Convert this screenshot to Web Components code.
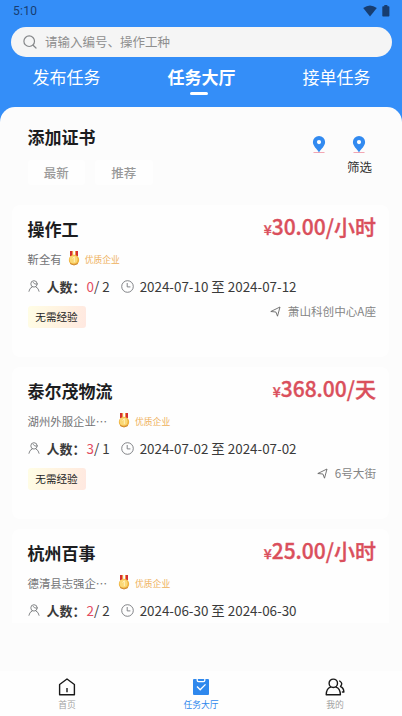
<!DOCTYPE html>
<html lang="zh-CN">
<head>
<meta charset="utf-8">
<title>任务大厅</title>
<style>
html,body{margin:0;height:100%;overflow:hidden}
body{font-family:"Noto Sans CJK SC",sans-serif;color:#1c1d1f;background:#fcfcfc}
</style>
</head>
<body>
<app-shell>
  <status-bar slot="header" time="5:10"></status-bar>
  <search-field slot="header">请输入编号、操作工种</search-field>
  <top-tabs slot="header">
    <top-tab>发布任务</top-tab><top-tab active>任务大厅</top-tab><top-tab>接单任务</top-tab>
  </top-tabs>
  <filter-bar heading="添加证书" action="筛选">
    <filter-chip>最新</filter-chip><filter-chip>推荐</filter-chip>
  </filter-bar>
  <task-list>
    <task-card name="操作工" price="30.00/小时" company="靳全有" joined="0" total="2" start="2024-07-10" end="2024-07-12" place="萧山科创中心A座"></task-card>
    <task-card name="泰尔茂物流" price="368.00/天" company="湖州外服企业⋯" joined="3" total="1" start="2024-07-02" end="2024-07-02" place="6号大街"></task-card>
    <task-card name="杭州百事" price="25.00/小时" company="德清县志强企⋯" joined="2" total="2" start="2024-06-30" end="2024-06-30"></task-card>
  </task-list>
  <nav-bar slot="footer">
    <nav-item icon="home">首页</nav-item><nav-item icon="tasks" active>任务大厅</nav-item><nav-item icon="user">我的</nav-item>
  </nav-bar>
</app-shell>
<script>
const define = (tag, render) => customElements.define(tag, class extends HTMLElement {
  constructor() {
    super();
    this.attachShadow({ mode: 'open' });
  }
  connectedCallback() {
    this.shadowRoot.innerHTML = render(name => this.getAttribute(name));
  }
});

const icons = {
  search: '<svg width="14" height="14" viewBox="0 0 14 14" fill="none" stroke="#858789" stroke-width="1.2" stroke-linecap="round"><circle cx="6.2" cy="6.2" r="5.3"/><path d="M10.1 10.2 13 13"/></svg>',
  wifi: '<svg width="14" height="12" viewBox="0 0 14 12"><path d="M.2 3.1Q7-2.1 13.8 3.1L7 11.4Z" fill="#173d70"/></svg>',
  battery: '<svg width="8" height="12" viewBox="0 0 8 12"><path d="M2.3 0h3.1v1.2h1.2q.8 0 .8.8v8.8q0 .8-.8.8H1.1q-.8 0-.8-.8V2q0-.8.8-.8h1.2z" fill="#173d70"/></svg>',
  pin: '<svg width="14" height="18" viewBox="0 0 14 18"><path d="M1.500 16.500h11" stroke="#f3a6b3" stroke-width="1"/><path d="M7 0a6.100 6.100 0 0 0-6.100 6.100C.9 10.100 4.800 13 7 16.400c2.200-3.400 6.100-6.300 6.100-10.300A6.100 6.100 0 0 0 7 0z" fill="#328af0"/><circle cx="7" cy="6.100" r="2.100" fill="#fff"/></svg>',
  medal: '<svg width="12" height="15" viewBox="0 0 12 15"><path d="M2 0h3v5H2zM7 0h3v5H7z" fill="#d42e32"/><path d="M4.200 0h1v5h-1zM7 0h.8v5H7z" fill="#f5b34c"/><circle cx="6" cy="8.900" r="5.200" fill="#eeb13e"/><circle cx="5.600" cy="8.400" r="4" fill="#fbd875"/><path d="M4.500 7.500 6.300 5.800v5.400" stroke="#fff2bd" fill="none"/><path d="M2 12.500q4 3 8 0" stroke="#cf8932" fill="none"/></svg>',
  person: '<svg width="12" height="12" viewBox="0 0 12 12" fill="none" stroke="#77797c" stroke-width=".9" stroke-linecap="round"><circle cx="6" cy="3.900" r="3.200"/><path d="M5.200 2.500q.7 1.600 2.700 1.700M4.200 6.900Q1.300 8 .9 11.300M7.900 6.900q2.700 1.100 3.200 4.400"/></svg>',
  clock: '<svg width="13" height="13" viewBox="0 0 13 13" fill="none" stroke="#74767a" stroke-width=".9"><circle cx="6.500" cy="6.500" r="5.800"/><path d="M6.200 3v3.900h3.200"/></svg>',
  plane: '<svg width="11" height="11" viewBox="0 0 11 11" fill="none" stroke="#666" stroke-width=".9" stroke-linejoin="round"><path d="M.8 5.500 10 1 7.500 10.200 5.900 6z"/></svg>',
  home: '<svg width="18" height="18" viewBox="0 0 18 18" fill="none" stroke="#191919" stroke-width="1.400" stroke-linejoin="round"><path d="M1.600 6.500 9 1l7.400 5.500v10.300H1.600z"/><path d="M9 10v4.200"/></svg>',
  tasks: '<svg width="18" height="18" viewBox="0 0 18 18"><path d="M2 1h14q1 0 1 1v14q0 1-1 1H2q-1 0-1-1V2q0-1 1-1z" fill="#2f88ed"/><path d="M5.200 1v1.200q0 1.400 1.400 1.400h4.800q1.400 0 1.400-1.400V1M5 8.500l3.200 3.300L13.500 6.400" fill="none" stroke="#fff" stroke-width="1.300"/></svg>',
  user: '<svg width="20" height="18" viewBox="0 0 20 18" fill="none" stroke="#191919" stroke-width="1.400" stroke-linecap="round" stroke-linejoin="round"><circle cx="8.300" cy="5.300" r="4.200"/><path d="M5.600 9.200Q1.400 10.500 1.200 16.800h14.200Q15.200 10.500 11 9.200M14.700 3q3.600 2.200.8 5.500 3.200 1.200 3.400 5.500h-1.500"/></svg>'
};

define('app-shell', () => `<style>
:host{display:flex;flex-direction:column;height:716px;background:#348ef8;overflow:hidden}
header{flex:none;height:107px}
main{flex:1;min-height:0;background:#fcfcfc;border-radius:15px 15px 0 0}
</style><header><slot name="header"></slot></header><main><slot></slot></main><slot name="footer"></slot>`);

define('status-bar', a => `<style>
:host{display:flex;align-items:center;height:23px;padding:0 12px 0 13px;color:#173d70;font:400 12px/23px Roboto,sans-serif;letter-spacing:.3px}
.icons{display:flex;gap:5px;margin-left:auto;margin-top:-1px}svg{display:block}
</style><span>${a('time')}</span><span class="icons">${icons.wifi}${icons.battery}</span>`);

define('search-field', () => `<style>
:host{display:flex;align-items:center;gap:8px;height:30px;margin:4px 10px 0 11px;padding-left:12px;border-radius:15px;background:#f5f5f5;color:#8f8f8f;font-size:12.5px;line-height:30px}
svg{display:block}
</style>${icons.search}<slot></slot>`);

define('top-tabs', () => `<style>:host{display:grid;grid-template-columns:repeat(3,135px);justify-content:center;height:50px;padding-left:1px}</style><slot></slot>`);

define('top-tab', () => `<style>
:host{display:flex;flex-direction:column;align-items:center;padding-top:8px;color:#fff;font-size:17px;line-height:24px}
:host([active]){font-weight:700}
:host([active])::after{content:"";width:18px;height:3px;margin-top:3px;margin-right:6px;border-radius:2px;background:#fff}
</style><slot></slot>`);

define('filter-bar', a => `<style>
:host{display:flex;justify-content:space-between;height:98px;box-sizing:border-box;padding:18px 30px 0 27.5px}
h2{margin:0;font-size:17px;line-height:24px;font-weight:700}
.chips{display:flex;gap:10px;margin-top:11px}
.tools{display:flex;flex-direction:column;align-items:flex-end;padding-top:11px}
.pins{display:flex;gap:26px;margin-right:6px}svg{display:block}
.action{font-size:12.5px;line-height:18px;margin-top:4px;color:#333}
</style><div><h2>${a('heading')}</h2><div class="chips"><slot></slot></div></div>
<div class="tools"><div class="pins">${icons.pin}${icons.pin}</div><span class="action">${a('action')}</span></div>`);

define('filter-chip', () => `<style>:host{display:block;width:57.5px;height:25px;border-radius:4px;background:#fefefe;text-align:center;color:#999;font-size:12.5px;line-height:25px;font-weight:500}</style><slot></slot>`);

define('task-list', () => `<style>:host{display:flex;flex-direction:column;gap:10px;height:418px;margin:0 13px 0 12px;overflow:hidden}</style><slot></slot>`);

define('task-card', a => `<style>
:host{display:block;flex:none;height:152px;box-sizing:border-box;padding:11px 13px 0 15.5px;border-radius:8px;background:#fefefe}
div{display:flex;align-items:center}
svg{display:block;flex:none}
.head{height:26px;justify-content:space-between}
h3{margin:0;font-size:17px;line-height:26px;font-weight:700}
.price{color:#da4f5c;font-size:21px;line-height:26px;font-weight:500;margin-top:-4px;-webkit-text-stroke:.35px #da4f5c}
.price small{font-size:14px}
.company{height:20px;margin-top:7px;color:#737476;font-size:11.400px}
.company svg{margin:-2px 5px 0 6px}
.company .cut{width:84.500px}
.badge{color:#eeb05a;font-size:8.800px}
.facts{height:20px;margin-top:7px;color:#3a3a3a;font-size:13.400px;white-space:nowrap}
.facts b{margin-left:7px;width:40px;font-size:13px}
.joined{color:#e34d61}
.facts .clock{margin:0 6px 0 11px}
.foot{margin-top:10px;align-items:flex-start;justify-content:space-between}
.tag{width:58px;height:22px;box-sizing:border-box;border-radius:3px;background:linear-gradient(100deg,#fffde5,#fff0df 65%,#ffe8e1);text-align:center;color:#222;font-size:10.600px;line-height:22px}
.place{gap:7px;color:#858585;font-size:11.600px;line-height:18px;margin-top:-4px}
</style>
<div class="head"><h3>${a('name')}</h3><span class="price"><small>¥</small>${a('price')}</span></div>
<div class="company"><span class="${a('company').endsWith('⋯') ? 'cut' : ''}">${a('company')}</span>${icons.medal}<span class="badge">优质企业</span></div>
<div class="facts">${icons.person}<b>人数：</b><span class="joined">${a('joined')}</span><span>/ ${a('total')}</span><span class="clock">${icons.clock}</span><span>${a('start')} 至 ${a('end')}</span></div>
${a('place') ? `<div class="foot"><span class="tag">无需经验</span><div class="place">${icons.plane}<span>${a('place')}</span></div></div>` : ''}`);

define('nav-bar', () => `<style>:host{display:grid;grid-template-columns:repeat(3,1fr);flex:none;height:45px;background:#fefefe}</style><slot></slot>`);

define('nav-item', a => `<style>
:host{display:flex;flex-direction:column;align-items:center;padding-top:7px;color:#a3a3a3;font-size:8.800px;line-height:13px}
:host([active]){color:#2f88ed}
svg{display:block;margin-bottom:2px}
</style>${icons[a('icon')]}<slot></slot>`);
</script>
</body>
</html>
